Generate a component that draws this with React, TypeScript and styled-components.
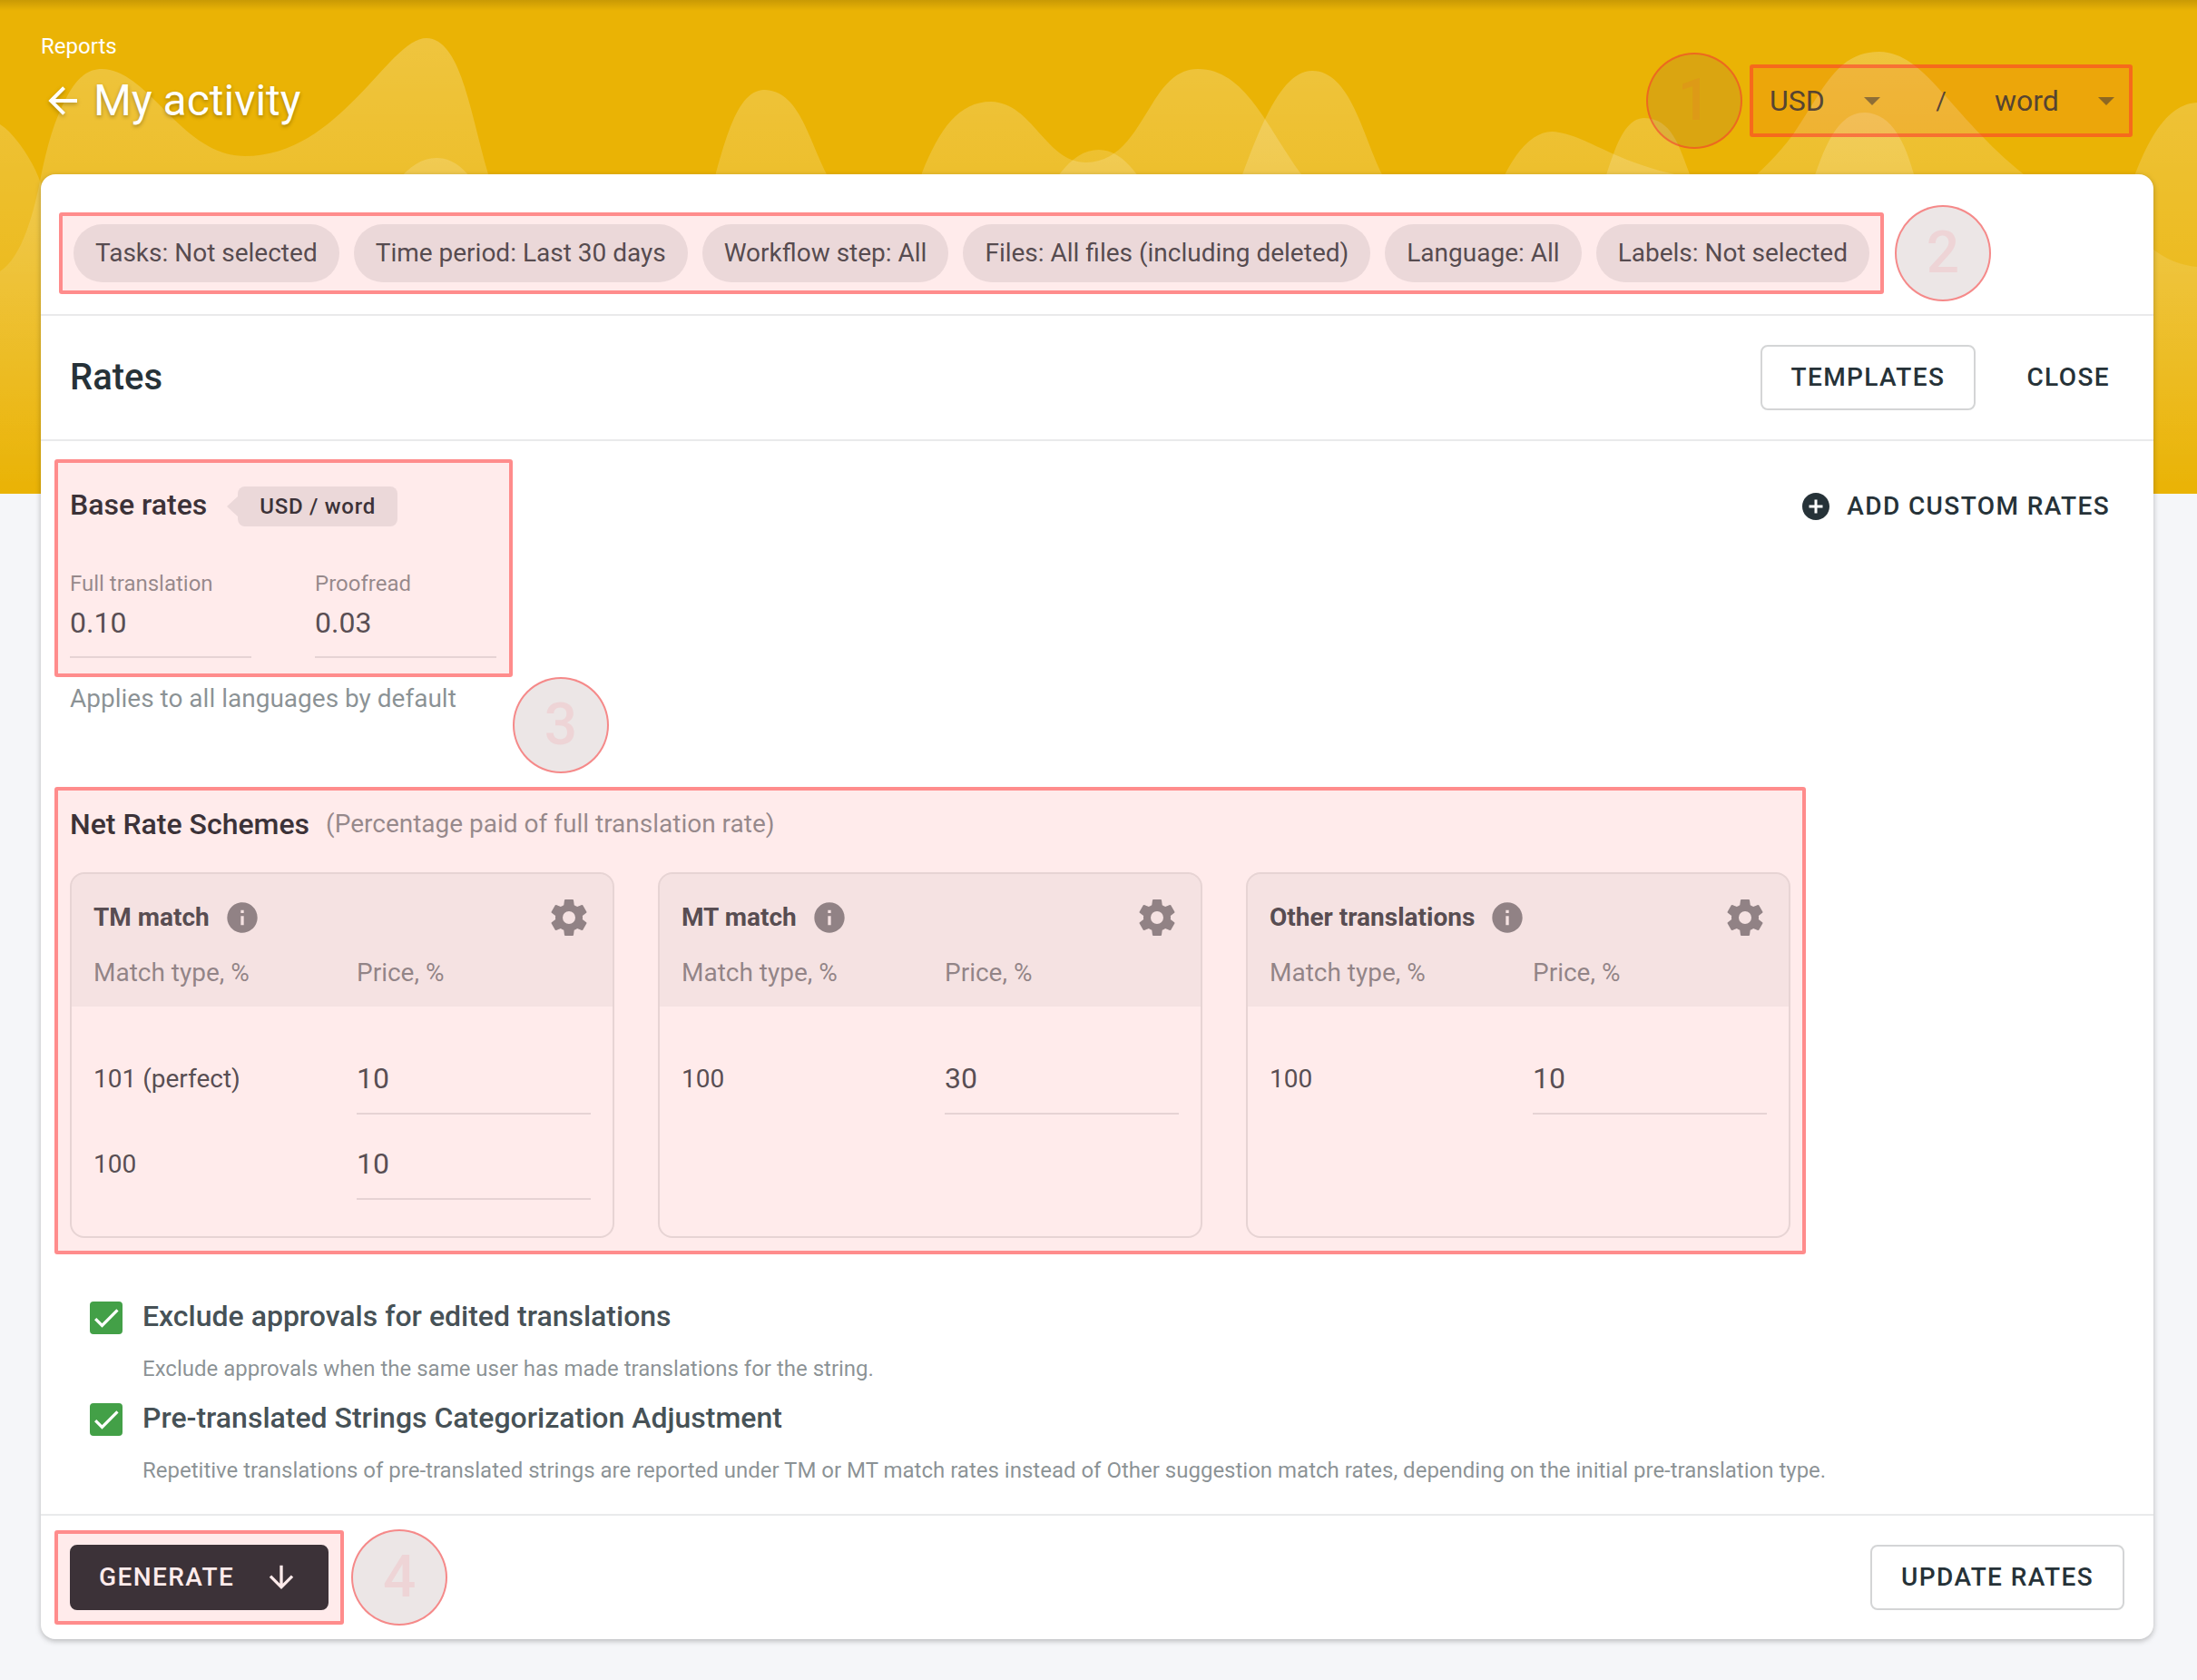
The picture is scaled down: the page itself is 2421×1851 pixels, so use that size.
import React from "react";
import styled, { createGlobalStyle, css } from "styled-components";

const ink = "#263238";
const inkSoft = "rgba(38, 50, 56, 0.87)";
const inkMuted = "rgba(38, 50, 56, 0.54)";
const line = "#e9eaeb";
const tint = "rgba(255, 55, 55, 0.1)";
const frame = "rgba(255, 45, 45, 0.5)";

const GlobalStyle = createGlobalStyle`
  *, *::before, *::after { box-sizing: border-box; }
  body {
    margin: 0;
    background: #f5f6f9;
    color: ${ink};
    font-family: Roboto, "Liberation Sans", sans-serif;
  }
  button, input, select { font: inherit; color: inherit; }
  h1, h2, h3, p { margin: 0; }
`;

/* ---------- page frame ---------- */

const Page = styled.div`
  position: relative;
  isolation: isolate;
  padding: 0 48px 45px 45px;
`;

const Backdrop = styled.div`
  position: absolute;
  inset: 0 0 auto 0;
  z-index: -1;
  height: 544px;
  overflow: hidden;
  background: linear-gradient(rgba(0, 0, 0, 0.14), rgba(0, 0, 0, 0) 12px), #eab305;

  svg {
    display: block;
    width: 100%;
    height: 100%;
  }
`;

const Header = styled.header`
  display: flex;
  align-items: flex-end;
  justify-content: space-between;
  padding: 35px 23px 41px 0;
`;

const Crumb = styled.a`
  display: block;
  margin-bottom: 4px;
  color: #fff;
  font-size: 24px;
  line-height: 32px;
  text-decoration: none;
`;

const TitleRow = styled.div`
  display: flex;
  align-items: center;
  gap: 10px;
  height: 80px;
  color: #fff;
`;

const Title = styled.h1`
  font-size: 48px;
  line-height: 56px;
  font-weight: 400;
  text-shadow: 0 2px 4px rgba(0, 0, 0, 0.3);
`;

const BackButton = styled.button`
  display: flex;
  padding: 0;
  border: 0;
  background: none;
  filter: drop-shadow(0 2px 2px rgba(0, 0, 0, 0.25));
`;

const Panel = styled.main`
  border-radius: 16px;
  background: #fff;
  box-shadow: 0 2px 6px rgba(0, 0, 0, 0.26);
`;

/* ---------- callouts ---------- */

const Callout = styled.div<{ $pad: string }>`
  position: relative;
  width: fit-content;
  padding: ${(p) => p.$pad};

  &::after {
    content: "";
    position: absolute;
    inset: 0;
    border: 4px solid ${frame};
    border-radius: 3px;
    background: ${tint};
    pointer-events: none;
  }
`;

type Spot = "before" | "after" | "corner";

const Badge = styled.span<{ $spot: Spot; $gap?: number }>`
  position: absolute;
  top: ${(p) => (p.$spot === "corner" ? "100%" : "calc(50% - 53px)")};
  ${(p) =>
    p.$spot === "before"
      ? css`right: calc(100% + ${p.$gap ?? 0}px);`
      : css`left: calc(100% + ${p.$gap ?? 0}px);`}
  display: flex;
  align-items: center;
  justify-content: center;
  width: 106px;
  height: 106px;
  border: 2px solid ${frame};
  border-radius: 50%;
  background: rgba(127, 90, 90, 0.15);
  color: rgba(255, 60, 75, 0.1);
  font-size: 64px;
  line-height: 64px;
  font-weight: 500;
`;

/* ---------- buttons ---------- */

const Button = styled.button<{ $kind: "outline" | "text" | "solid" }>`
  display: inline-flex;
  align-items: center;
  height: 72px;
  padding: 0 32px;
  border: 2px solid transparent;
  border-radius: 8px;
  background: none;
  color: ${ink};
  font-size: 28px;
  line-height: 36px;
  font-weight: 500;
  letter-spacing: 0.05em;
  text-transform: uppercase;
  white-space: nowrap;

  ${(p) => p.$kind === "outline" && css`border-color: #d4d5d6;`}
  ${(p) =>
    p.$kind === "text" &&
    css`
      gap: 16px;
      padding: 0 14px;
    `}
  ${(p) =>
    p.$kind === "solid" &&
    css`
      gap: 32px;
      padding: 0 30px;
      background: ${ink};
      border-color: ${ink};
      color: #fff;
    `}
`;

const IconButton = styled.button`
  display: flex;
  padding: 0;
  border: 0;
  background: none;
  color: ${inkMuted};
`;

/* ---------- currency and unit ---------- */

const UnitPicker = styled.div`
  display: flex;
  align-items: center;
  height: 72px;
  width: 380px;
  color: ${inkSoft};
  font-size: 32px;
`;

const Dropdown = styled.div<{ $width: number }>`
  display: grid;
  grid-template-columns: 1fr 18px;
  align-items: center;
  width: ${(p) => p.$width}px;

  select {
    grid-area: 1 / 1 / 2 / 3;
    width: 100%;
    height: 48px;
    padding: 0;
    border: 0;
    background: none;
    appearance: none;
    line-height: 40px;
  }

  svg {
    grid-area: 1 / 2;
    pointer-events: none;
  }
`;

const Slash = styled.span`
  flex: 1;
  padding-left: 8px;
  text-align: center;
  font-size: 28px;
`;

/* ---------- filters ---------- */

const FilterBar = styled.section`
  padding: 42px 20px 22px;
  border-bottom: 2px solid ${line};
`;

const Chips = styled.div`
  display: flex;
  gap: 16px;
`;

const Chip = styled.button`
  height: 64px;
  padding: 0 24px;
  border: 0;
  border-radius: 32px;
  background: rgba(38, 50, 56, 0.1);
  color: ${inkSoft};
  font-size: 28px;
  line-height: 36px;
  white-space: nowrap;
`;

/* ---------- rates ---------- */

const RatesBar = styled.div`
  display: flex;
  align-items: center;
  justify-content: space-between;
  height: 138px;
  padding: 0 32px;
  border-bottom: 2px solid ${line};
`;

const RatesTitle = styled.h2`
  font-size: 40px;
  line-height: 48px;
  font-weight: 500;
`;

const Actions = styled.div`
  display: flex;
  gap: 40px;
`;

const RatesBody = styled.section`
  padding: 20px 32px 32px 15px;
`;

const BaseRow = styled.div`
  display: flex;
  align-items: flex-start;
  justify-content: space-between;

  > button {
    margin-top: 16px;
  }
`;

const Heading = styled.div`
  display: flex;
  align-items: flex-start;
`;

const SectionTitle = styled.h3`
  font-size: 32px;
  line-height: 40px;
  font-weight: 500;
`;

const UnitTag = styled.span`
  position: relative;
  height: 44px;
  margin-left: 34px;
  padding: 0 24px;
  border-radius: 8px;
  background: rgba(38, 50, 56, 0.1);
  font-size: 24px;
  line-height: 44px;
  font-weight: 500;
  letter-spacing: 0.03em;

  &::before {
    content: "";
    position: absolute;
    right: 100%;
    top: 11px;
    border: solid transparent;
    border-width: 11px 12px 11px 0;
    border-right-color: rgba(38, 50, 56, 0.1);
  }
`;

const Fields = styled.div`
  display: flex;
  gap: 70px;
  margin-top: 47px;
`;

const Field = styled.label`
  display: block;
  width: 200px;
  color: ${inkMuted};
  font-size: 24px;
  line-height: 32px;
`;

const TextInput = styled.input`
  display: block;
  width: 100%;
  height: 78px;
  padding: 0;
  border: 0;
  border-bottom: 2px solid #e4e5e6;
  border-radius: 0;
  outline: 0;
  background: none;
  color: ${inkSoft};
  font-size: 32px;
  line-height: 40px;

  ${Field} & {
    height: 66px;
    padding-bottom: 10px;
  }
`;

const Note = styled.p`
  margin: 4px 0 77px 17px;
  color: ${inkMuted};
  font-size: 28px;
  line-height: 40px;
`;

const Hint = styled.span`
  margin-left: 18px;
  color: ${inkMuted};
  font-size: 28px;
  line-height: 40px;
`;

const Cards = styled.div`
  display: grid;
  grid-template-columns: repeat(3, 600px);
  gap: 48px;
  margin-top: 33px;
`;

const Card = styled.article`
  overflow: hidden;
  padding-bottom: 33px;
  border: 2px solid #e5e6e6;
  border-radius: 16px;
`;

const CardHead = styled.div`
  display: flex;
  align-items: center;
  gap: 16px;
  padding: 24px 24px 0;
  background: rgba(38, 50, 56, 0.05);
  color: ${inkMuted};

  h3 {
    color: ${inkSoft};
    font-size: 28px;
    line-height: 36px;
    font-weight: 700;
  }

  button:last-child {
    margin-left: auto;
  }
`;

const MatchTable = styled.table`
  width: 100%;
  table-layout: fixed;
  border-collapse: collapse;
  color: ${inkSoft};
  font-size: 28px;
  line-height: 36px;
  text-align: left;

  th {
    height: 74px;
    padding: 0 0 0 24px;
    background: rgba(38, 50, 56, 0.05);
    color: ${inkMuted};
    font-weight: 400;
  }
  th + th {
    padding-left: 16px;
  }
  td {
    padding: 9px 0 7px 24px;
  }
  td + td {
    padding: 9px 24px 7px 16px;
  }
  tbody tr:first-child td {
    padding-top: 41px;
  }
`;

/* ---------- options ---------- */

const Options = styled.div`
  display: grid;
  gap: 22px;
  margin: 52px 0 0 39px;
`;

const Option = styled.div`
  display: grid;
  grid-template-columns: 36px 1fr;
  column-gap: 22px;
  row-gap: 22px;

  label {
    height: 36px;
    color: ${inkSoft};
    font-size: 32px;
    line-height: 32px;
    font-weight: 500;
  }
  p {
    grid-column: 2;
    color: ${inkMuted};
    font-size: 24px;
    line-height: 32px;
  }
`;

const Tick = styled.span`
  display: grid;

  > * {
    grid-area: 1 / 1;
  }
  input {
    width: 36px;
    height: 36px;
    margin: 0;
    border: 4px solid #8a9296;
    border-radius: 4px;
    appearance: none;
  }
  input:checked {
    border-color: #43a047;
    background: #43a047;
  }
  svg {
    pointer-events: none;
  }
`;

const Footer = styled.footer`
  display: flex;
  align-items: center;
  justify-content: space-between;
  height: 138px;
  padding: 0 32px 0 15px;
  border-top: 2px solid ${line};
`;

/* ---------- icons ---------- */

type IconProps = { size: number; d: string };

const Icon = ({ size, d }: IconProps) => (
  <svg width={size} height={size} viewBox="0 0 24 24" fill="currentColor" aria-hidden="true">
    <path d={d} />
  </svg>
);

const icons = {
  back: "M20 11v2H8l5.5 5.5-1.42 1.42L4.16 12l7.92-7.92L13.5 5.5 8 11h12z",
  down: "M11 4h2v12l5.5-5.5 1.42 1.42L12 19.84l-7.92-7.92L5.5 10.5 11 16V4z",
  add: "M12 2C6.48 2 2 6.48 2 12s4.48 10 10 10 10-4.48 10-10S17.52 2 12 2zm5 11h-4v4h-2v-4H7v-2h4V7h2v4h4v2z",
  info: "M12 2C6.48 2 2 6.48 2 12s4.48 10 10 10 10-4.48 10-10S17.52 2 12 2zm1 15h-2v-6h2v6zm0-8h-2V7h2v2z",
  gear: "M12 15.5A3.5 3.5 0 0 1 8.5 12 3.5 3.5 0 0 1 12 8.5a3.5 3.5 0 0 1 3.5 3.5 3.5 3.5 0 0 1-3.5 3.5m7.43-2.53c.04-.32.07-.64.07-.97 0-.33-.03-.66-.07-1l2.11-1.63c.19-.15.24-.42.12-.64l-2-3.46c-.12-.22-.39-.31-.61-.22l-2.49 1c-.52-.39-1.06-.73-1.69-.98l-.37-2.65A.506.506 0 0 0 14 2h-4c-.25 0-.46.18-.5.42l-.37 2.65c-.63.25-1.17.59-1.69.98l-2.49-1c-.22-.09-.49 0-.61.22l-2 3.46c-.13.22-.07.49.12.64L4.57 11c-.04.34-.07.67-.07 1 0 .33.03.65.07.97l-2.11 1.66c-.19.15-.25.42-.12.64l2 3.46c.12.22.39.3.61.22l2.49-1.01c.52.4 1.06.74 1.69.99l.37 2.65c.04.24.25.42.5.42h4c.25 0 .46-.18.5-.42l.37-2.65c.63-.26 1.17-.59 1.69-.99l2.49 1.01c.22.08.49 0 .61-.22l2-3.46c.12-.22.07-.49-.12-.64l-2.11-1.66z",
};

const Caret = () => (
  <svg width="18" height="9" viewBox="0 0 18 9" fill={inkMuted} aria-hidden="true">
    <path d="M0 0h18L9 9z" />
  </svg>
);

const waves = [
  "M-60 137C-30 120 -5 130 10 145C26 162 38 182 45 202C60 250 80 300 90 544H-60z",
  "M0 299C20 286 34 250 44 200C52 160 60 132 74 106C86 84 98 76 112 76C165 77 200 172 270 172C375 172 428 42 470 42C508 43 518 124 538 192L560 544H0z",
  "M400 260C425 215 448 174 481 174C512 174 530 210 560 260V544H400z",
  "M760 300C792 190 803 100 842 99C880 100 890 150 911 192C930 240 950 300 960 544H760z",
  "M980 300C1014 190 1035 112 1092 112C1138 113 1152 179 1197 179C1262 178 1264 76 1320 76C1372 76 1396 140 1434 192C1460 240 1480 300 1500 544H980z",
  "M1130 260C1155 205 1178 165 1211 165C1245 166 1266 210 1290 260V544H1130z",
  "M1330 300C1370 200 1398 78 1446 78C1488 78 1502 150 1523 192C1540 240 1560 300 1570 544H1330z",
  "M1620 300C1650 190 1678 146 1710 145C1746 147 1774 177 1850 193C1900 220 1940 280 1960 544H1620z",
  "M1740 300C1771 190 1782 130 1812 130C1842 131 1850 160 1862 192C1880 240 1890 300 1900 544H1740z",
  "M1860 250C1900 222 1944 192 1976 148C2010 98 2024 57 2071 57C2122 58 2148 126 2230 192C2280 240 2310 300 2330 544H1860z",
  "M1970 300C1999 192 2014 124 2055 124C2086 125 2100 160 2109 192C2130 240 2140 300 2150 544H1970z",
  "M2310 330C2345 210 2368 116 2421 113V544H2310z",
  "M2340 240C2368 276 2390 291 2421 294V544H2340z",
];

const Waves = () => (
  <svg viewBox="0 0 2421 544" preserveAspectRatio="none" aria-hidden="true">
    <defs>
      <linearGradient id="wave" gradientUnits="userSpaceOnUse" x1="0" y1="40" x2="0" y2="544">
        <stop offset="0" stopColor="#fff" stopOpacity="0.23" />
        <stop offset="1" stopColor="#fff" stopOpacity="0" />
      </linearGradient>
    </defs>
    {waves.map((d) => (
      <path key={d} d={d} fill="url(#wave)" />
    ))}
  </svg>
);

/* ---------- data ---------- */

const filters = [
  "Tasks: Not selected",
  "Time period: Last 30 days",
  "Workflow step: All",
  "Files: All files (including deleted)",
  "Language: All",
  "Labels: Not selected",
];

const schemes = [
  { name: "TM match", rows: [["101 (perfect)", "10"], ["100", "10"]] },
  { name: "MT match", rows: [["100", "30"]] },
  { name: "Other translations", rows: [["100", "10"]] },
];

const options = [
  {
    id: "exclude",
    title: "Exclude approvals for edited translations",
    text: "Exclude approvals when the same user has made translations for the string.",
  },
  {
    id: "categorize",
    title: "Pre-translated Strings Categorization Adjustment",
    text: "Repetitive translations of pre-translated strings are reported under TM or MT match rates instead of Other suggestion match rates, depending on the initial pre-translation type.",
  },
];

const SchemeCard = ({ name, rows }: { name: string; rows: string[][] }) => (
  <Card>
    <CardHead>
      <h3>{name}</h3>
      <IconButton type="button" aria-label={`About ${name}`}>
        <Icon size={40} d={icons.info} />
      </IconButton>
      <IconButton type="button" aria-label={`${name} settings`}>
        <Icon size={48} d={icons.gear} />
      </IconButton>
    </CardHead>
    <MatchTable>
      <thead>
        <tr>
          <th scope="col">Match type, %</th>
          <th scope="col">Price, %</th>
        </tr>
      </thead>
      <tbody>
        {rows.map(([type, price]) => (
          <tr key={type}>
            <td>{type}</td>
            <td>
              <TextInput defaultValue={price} aria-label={`${name} ${type} price`} />
            </td>
          </tr>
        ))}
      </tbody>
    </MatchTable>
  </Card>
);

export default function App() {
  return (
    <Page>
      <GlobalStyle />
      <Backdrop>
        <Waves />
      </Backdrop>

      <Header>
        <div>
          <Crumb href="#reports">Reports</Crumb>
          <TitleRow>
            <BackButton type="button" aria-label="Back">
              <Icon size={48} d={icons.back} />
            </BackButton>
            <Title>My activity</Title>
          </TitleRow>
        </div>
        <Callout $pad="4px 20px 4px 22px">
          <UnitPicker>
            <Dropdown $width={122}>
              <select aria-label="Currency" defaultValue="USD">
                <option>USD</option>
                <option>EUR</option>
              </select>
              <Caret />
            </Dropdown>
            <Slash>/</Slash>
            <Dropdown $width={132}>
              <select aria-label="Unit" defaultValue="word">
                <option>word</option>
                <option>character</option>
              </select>
              <Caret />
            </Dropdown>
          </UnitPicker>
          <Badge $spot="before" $gap={8}>1</Badge>
        </Callout>
      </Header>

      <Panel>
        <FilterBar>
          <Callout $pad="13px 16px">
            <Chips>
              {filters.map((label) => (
                <Chip type="button" key={label}>
                  {label}
                </Chip>
              ))}
            </Chips>
            <Badge $spot="after" $gap={12}>2</Badge>
          </Callout>
        </FilterBar>

        <RatesBar>
          <RatesTitle>Rates</RatesTitle>
          <Actions>
            <Button type="button" $kind="outline">Templates</Button>
            <Button type="button" $kind="text">Close</Button>
          </Actions>
        </RatesBar>

        <RatesBody>
          <BaseRow>
            <Callout $pad="30px 18px 21px 17px">
              <Heading>
                <SectionTitle>Base rates</SectionTitle>
                <UnitTag>USD / word</UnitTag>
              </Heading>
              <Fields>
                <Field>
                  Full translation
                  <TextInput defaultValue="0.10" />
                </Field>
                <Field>
                  Proofread
                  <TextInput defaultValue="0.03" />
                </Field>
              </Fields>
              <Badge $spot="corner">3</Badge>
            </Callout>
            <Button type="button" $kind="text">
              <Icon size={36} d={icons.add} />
              Add custom rates
            </Button>
          </BaseRow>
          <Note>Applies to all languages by default</Note>

          <Callout $pad="21px 17px 18px">
            <Heading>
              <SectionTitle>Net Rate Schemes</SectionTitle>
              <Hint>(Percentage paid of full translation rate)</Hint>
            </Heading>
            <Cards>
              {schemes.map((s) => (
                <SchemeCard key={s.name} {...s} />
              ))}
            </Cards>
          </Callout>

          <Options>
            {options.map((o) => (
              <Option key={o.id}>
                <Tick>
                  <input type="checkbox" id={o.id} defaultChecked />
                  <svg width="36" height="36" viewBox="0 0 24 24" aria-hidden="true">
                    <path d="M4.1 12.7 9 17.6 20.3 6.3" fill="none" stroke="#fff" strokeWidth="2.13" />
                  </svg>
                </Tick>
                <label htmlFor={o.id}>{o.title}</label>
                <p>{o.text}</p>
              </Option>
            ))}
          </Options>
        </RatesBody>

        <Footer>
          <Callout $pad="16px 17px">
            <Button type="button" $kind="solid">
              Generate
              <Icon size={40} d={icons.down} />
            </Button>
            <Badge $spot="after" $gap={8}>4</Badge>
          </Callout>
          <Button type="button" $kind="outline">Update rates</Button>
        </Footer>
      </Panel>
    </Page>
  );
}
